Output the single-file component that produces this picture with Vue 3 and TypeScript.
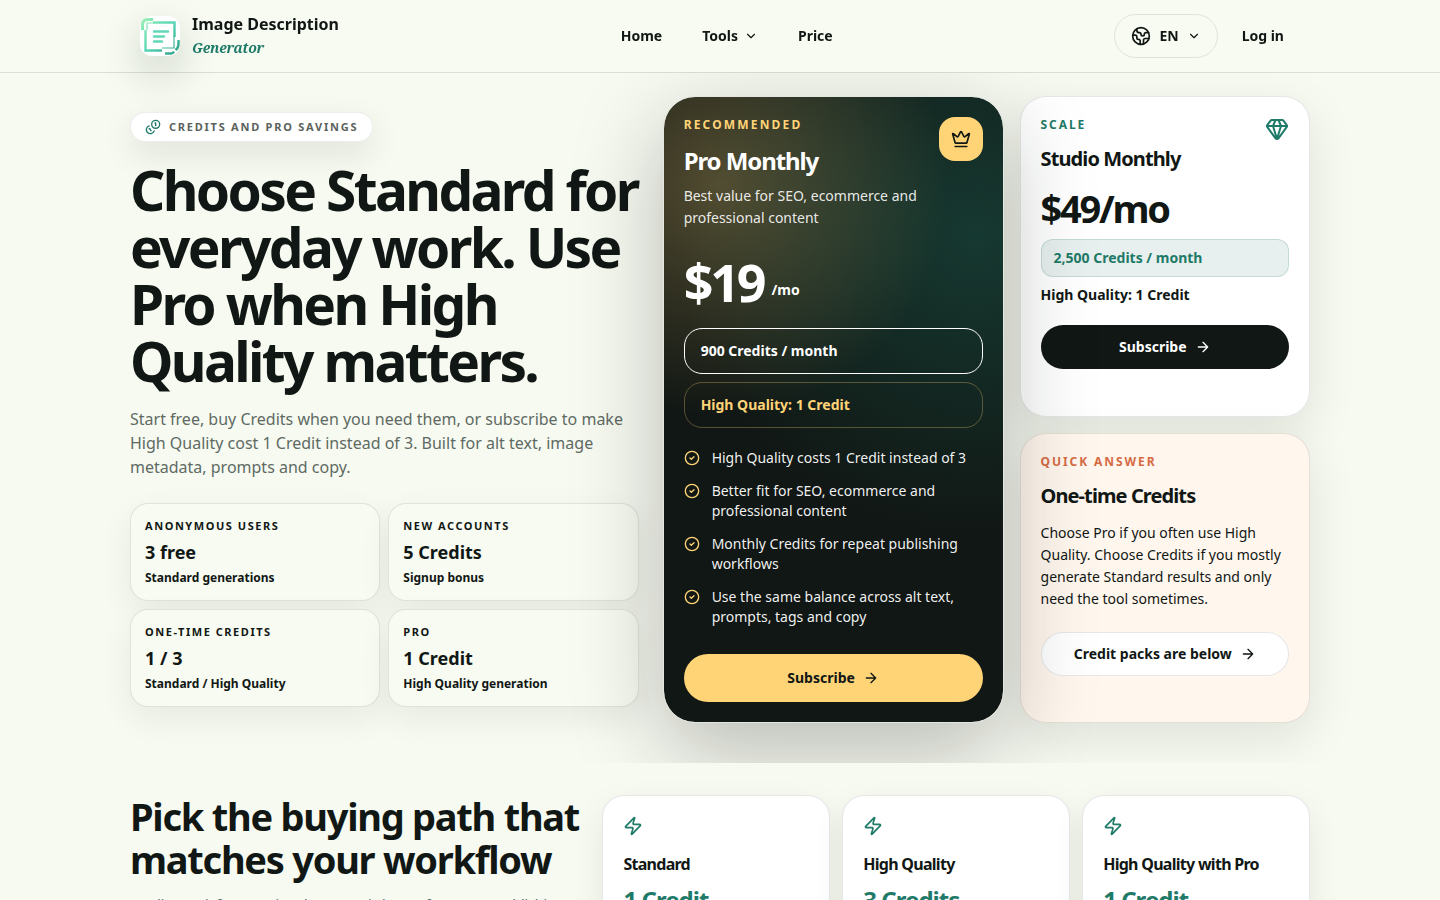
<script setup lang="ts">
interface Stat {
  label: string
  value: string
  note: string
}

interface Path {
  title: string
  cost: string
}

const stats: Stat[] = [
  { label: 'Anonymous users', value: '3 free', note: 'Standard generations' },
  { label: 'New accounts', value: '5 Credits', note: 'Signup bonus' },
  { label: 'One-time credits', value: '1 / 3', note: 'Standard / High Quality' },
  { label: 'Pro', value: '1 Credit', note: 'High Quality generation' },
]

const features: string[] = [
  'High Quality costs 1 Credit instead of 3',
  'Better fit for SEO, ecommerce and professional content',
  'Monthly Credits for repeat publishing workflows',
  'Use the same balance across alt text, prompts, tags and copy',
]

const paths: Path[] = [
  { title: 'Standard', cost: '1 Credit' },
  { title: 'High Quality', cost: '3 Credits' },
  { title: 'High Quality with Pro', cost: '1 Credit' },
]
</script>

<template>
  <div class="page">
    <header class="topbar">
      <div class="topbar-inner">
        <a class="brand" href="#">
          <span class="brand-mark">
            <svg viewBox="0 0 40 40" width="40" height="40" fill="none" aria-hidden="true">
              <defs>
                <linearGradient id="mark" gradientUnits="userSpaceOnUse" x1="2" y1="2" x2="38" y2="38">
                  <stop offset="0" stop-color="#9bf0b4" />
                  <stop offset="0.5" stop-color="#5ad6b6" />
                  <stop offset="1" stop-color="#2a9f86" />
                </linearGradient>
              </defs>
              <g stroke="url(#mark)">
                <path d="M2.500 14V9q0-5.500 5.500-5.500h5" stroke-width="3" />
                <path d="M5.500 14v20.500H22M13 6.500h21.500V21" stroke-width="2.400" />
                <path d="M7 14V7h8M34 20v12H22" stroke-width="1.200" />
                <path d="M38.500 24v4q0 4-3 6M25 37.500h6q2 0 3-2" stroke-width="2.400" />
              </g>
              <path d="M14 15.500h14M14 20.500h10M14 25.500h8" stroke="#62d8b8" stroke-width="2.400" stroke-linecap="round" />
            </svg>
          </span>
          <span class="brand-text">
            <span class="brand-name">Image Description</span>
            <span class="brand-sub">Generator</span>
          </span>
        </a>
        <nav class="nav" aria-label="Main">
          <a href="#">Home</a>
          <button type="button">
            Tools
            <svg class="icon" viewBox="0 0 24 24" width="14" height="14" aria-hidden="true"><path d="m6 9 6 6 6-6" /></svg>
          </button>
          <a href="#">Price</a>
        </nav>
        <div class="account">
          <button class="lang" type="button">
            <svg class="icon" viewBox="0 0 24 24" width="20" height="20" aria-hidden="true">
              <path d="M21.540 15H17a2 2 0 0 0-2 2v4.540M7 3.340V5a3 3 0 0 0 3 3 2 2 0 0 1 2 2c0 1.100.9 2 2 2a2 2 0 0 0 2-2c0-1.100.9-2 2-2h3.170M11 21.950V18a2 2 0 0 0-2-2 2 2 0 0 1-2-2v-1a2 2 0 0 0-2-2H2.050" />
              <circle cx="12" cy="12" r="10" />
            </svg>
            EN
            <svg class="icon" viewBox="0 0 24 24" width="14" height="14" aria-hidden="true"><path d="m6 9 6 6 6-6" /></svg>
          </button>
          <a class="login" href="#">Log in</a>
        </div>
      </div>
    </header>

    <main>
      <section class="hero">
        <div class="hero-grid">
          <div class="intro">
            <p class="pill">
              <svg class="icon" viewBox="0 0 24 24" width="16" height="16" aria-hidden="true">
                <path d="M13.744 17.736a6 6 0 1 1-7.480-7.480M15 6h1v4M6.134 14.768l.866-.5 2 3.464" />
                <circle cx="16" cy="8" r="6" />
              </svg>
              Credits and pro savings
            </p>
            <h1>Choose Standard for everyday work. Use Pro when High Quality matters.</h1>
            <p class="lead">
              Start free, buy Credits when you need them, or subscribe to make High Quality cost 1 Credit
              instead of 3. Built for alt text, image metadata, prompts and copy.
            </p>
            <ul class="stats">
              <li v-for="stat in stats" :key="stat.label" class="stat">
                <span class="stat-label">{{ stat.label }}</span>
                <strong class="stat-value">{{ stat.value }}</strong>
                <span class="stat-note">{{ stat.note }}</span>
              </li>
            </ul>
          </div>

          <div class="plans">
            <article class="pro">
              <div class="pro-head">
                <div>
                  <p class="eyebrow gold">Recommended</p>
                  <h2>Pro Monthly</h2>
                  <p class="pro-desc">Best value for SEO, ecommerce and professional content</p>
                </div>
                <span class="crown">
                  <svg class="icon" viewBox="0 0 24 24" width="20" height="20" aria-hidden="true">
                    <path d="M11.562 3.266a.5.5 0 0 1 .876 0L15.390 8.870a1 1 0 0 0 1.516.294L21.183 5.500a.5.5 0 0 1 .798.519l-2.834 10.246a1 1 0 0 1-.956.734H5.810a1 1 0 0 1-.957-.734L2.020 6.020a.5.5 0 0 1 .798-.519l4.276 3.664a1 1 0 0 0 1.516-.294zM5 21h14" />
                  </svg>
                </span>
              </div>
              <p class="pro-price"><strong>$19</strong><span>/mo</span></p>
              <p class="chip">900 Credits / month</p>
              <p class="chip chip-gold">High Quality: 1 Credit</p>
              <ul class="features">
                <li v-for="feature in features" :key="feature">
                  <svg class="icon" viewBox="0 0 24 24" width="16" height="16" aria-hidden="true">
                    <circle cx="12" cy="12" r="10" />
                    <path d="m9 12 2 2 4-4" />
                  </svg>
                  {{ feature }}
                </li>
              </ul>
              <button class="cta cta-gold" type="button">
                Subscribe
                <svg class="icon" viewBox="0 0 24 24" width="16" height="16" aria-hidden="true"><path d="M5 12h14M12 5l7 7-7 7" /></svg>
              </button>
            </article>

            <div class="side">
              <article class="card">
                <div class="card-head">
                  <div>
                    <p class="eyebrow green">Scale</p>
                    <h3>Studio Monthly</h3>
                  </div>
                  <svg class="icon green" viewBox="0 0 24 24" width="24" height="24" aria-hidden="true">
                    <path d="M10.500 3 8 9l4 13 4-13-2.500-6M17 3a2 2 0 0 1 1.600.8l3 4a2 2 0 0 1 .013 2.382l-7.990 10.986a2 2 0 0 1-3.247 0l-7.990-10.986A2 2 0 0 1 2.400 7.800l2.998-3.997A2 2 0 0 1 7 3zM2 9h20" />
                  </svg>
                </div>
                <p class="card-price">$49/mo</p>
                <p class="credit-box">2,500 Credits / month</p>
                <p class="card-note">High Quality: 1 Credit</p>
                <button class="cta cta-dark" type="button">
                  Subscribe
                  <svg class="icon" viewBox="0 0 24 24" width="16" height="16" aria-hidden="true"><path d="M5 12h14M12 5l7 7-7 7" /></svg>
                </button>
              </article>
              <article class="card peach">
                <p class="eyebrow orange">Quick answer</p>
                <h3>One-time Credits</h3>
                <p class="card-text">
                  Choose Pro if you often use High Quality. Choose Credits if you mostly generate Standard
                  results and only need the tool sometimes.
                </p>
                <a class="cta cta-light" href="#">
                  Credit packs are below
                  <svg class="icon" viewBox="0 0 24 24" width="16" height="16" aria-hidden="true"><path d="M5 12h14M12 5l7 7-7 7" /></svg>
                </a>
              </article>
            </div>
          </div>
        </div>
      </section>

      <section class="paths">
        <div class="paths-grid">
          <div>
            <h2>Pick the buying path that matches your workflow</h2>
            <p class="paths-text">
              Credits work for occasional use. Pro is better for repeat publishing, especially when
              High Quality matters.
            </p>
          </div>
          <ul class="path-cards">
            <li v-for="path in paths" :key="path.title" class="path-card">
              <svg class="icon green" viewBox="0 0 24 24" width="20" height="20" aria-hidden="true">
                <path d="M4 14a1 1 0 0 1-.780-1.630l9.900-10.200a.5.5 0 0 1 .860.460l-1.920 6.020A1 1 0 0 0 13 10h7a1 1 0 0 1 .780 1.630l-9.900 10.200a.5.5 0 0 1-.860-.460l1.920-6.020A1 1 0 0 0 11 14z" />
              </svg>
              <h3>{{ path.title }}</h3>
              <p>{{ path.cost }}</p>
            </li>
          </ul>
        </div>
      </section>
    </main>
  </div>
</template>

<style>
body {
  margin: 0;
  background: #f7faf1;
}
</style>

<style scoped>
.page {
  font-family: "Noto Sans", "Liberation Sans", sans-serif;
  font-size: 14px;
  line-height: 20px;
  color: #111714;
  background: #f7faf1;
}

.page *,
.page *::before {
  box-sizing: border-box;
}

h1, h2, h3, p, ul {
  margin: 0;
  padding: 0;
}

ul {
  list-style: none;
}

a {
  color: inherit;
  text-decoration: none;
}

button {
  font: inherit;
  color: inherit;
  background: none;
  border: 0;
  padding: 0;
  cursor: pointer;
}

.icon {
  flex: none;
  fill: none;
  stroke: currentColor;
  stroke-width: 2;
  stroke-linecap: round;
  stroke-linejoin: round;
}

.topbar {
  position: sticky;
  top: 0;
  z-index: 10;
  background: rgba(247, 250, 241, 0.86);
  backdrop-filter: blur(18px);
  box-shadow: 0 1px 0 rgba(17, 23, 20, 0.12);
}

.topbar-inner {
  display: flex;
  justify-content: space-between;
  align-items: center;
  max-width: 1160px;
  height: 72px;
  margin: 0 auto;
}

.brand {
  display: flex;
  align-items: center;
  gap: 12px;
}

.brand-mark {
  width: 40px;
  height: 40px;
  border-radius: 12px;
  background: #fff;
  box-shadow: 0 16px 40px rgba(17, 23, 20, 0.2);
}

.brand-text {
  display: flex;
  flex-direction: column;
  line-height: 24px;
}

.brand-name {
  font-size: 16px;
  font-weight: 700;
}

.brand-sub {
  font-family: "Noto Serif", "Liberation Serif", serif;
  font-size: 14px;
  font-style: italic;
  font-weight: 700;
  letter-spacing: -0.02em;
  color: #1f7a68;
}

.nav {
  display: flex;
  gap: 40px;
  font-weight: 700;
}

.nav button {
  display: flex;
  align-items: center;
  gap: 6px;
}

.account {
  display: flex;
  justify-content: flex-end;
  align-items: center;
  gap: 8px;
  font-weight: 700;
}

.lang {
  display: flex;
  align-items: center;
  gap: 8px;
  height: 44px;
  padding: 0 16px;
  border: 1px solid rgba(17, 23, 20, 0.1);
  border-radius: 22px;
}

.login {
  padding: 0 16px;
}

.hero {
  padding: 24px 0 40px;
  overflow: hidden;
}

.hero-grid,
.paths-grid {
  display: grid;
  max-width: 1180px;
  margin: 0 auto;
}

.hero-grid {
  grid-template-columns: 44fr 56fr;
  gap: 24px;
}

.intro {
  padding: 16px 0;
}

.pill {
  display: flex;
  align-items: center;
  gap: 8px;
  width: fit-content;
  height: 30px;
  padding: 0 14px;
  border: 1px solid rgba(17, 23, 20, 0.08);
  border-radius: 15px;
  background: #fff;
  box-shadow: 0 12px 32px rgba(17, 23, 20, 0.1);
  font-size: 11px;
  line-height: 16px;
  font-weight: 700;
  letter-spacing: 0.16em;
  text-transform: uppercase;
  color: #5a625c;
}

.pill .icon,
.green {
  color: #1f7a68;
}

h1 {
  margin-top: 19px;
  font-size: 55px;
  line-height: 57px;
  font-weight: 700;
  letter-spacing: -0.048em;
}

.lead {
  margin-top: 18px;
  font-size: 16px;
  line-height: 24px;
  color: #5e6a63;
}

.stats {
  display: grid;
  grid-template-columns: 1fr 1fr;
  gap: 8px;
  margin-top: 24px;
}

.stat {
  display: flex;
  flex-direction: column;
  padding: 14px 14px 13px;
  border: 1px solid rgba(17, 23, 20, 0.1);
  border-radius: 18px;
  background: #f8fbf2;
  box-shadow: 0 12px 32px rgba(17, 23, 20, 0.07);
}

.stat-label {
  font-size: 11px;
  line-height: 16px;
  font-weight: 700;
  letter-spacing: 0.14em;
  text-transform: uppercase;
}

.stat-value {
  margin-top: 4px;
  font-size: 18px;
  line-height: 28px;
  font-weight: 700;
}

.stat-note {
  margin-top: 3px;
  font-size: 12px;
  line-height: 18px;
  font-weight: 700;
}

.plans {
  display: grid;
  grid-template-columns: 54fr 46fr;
  gap: 16px;
}

.pro {
  position: relative;
  z-index: 1;
  display: flex;
  flex-direction: column;
  padding: 20px;
  border: 1px solid #e3e7e0;
  border-radius: 32px;
  background:
    radial-gradient(circle at 16% 14%, rgba(255, 212, 119, 0.27), transparent 38%),
    radial-gradient(circle at 92% 22%, rgba(31, 122, 104, 0.34), transparent 52%),
    #111714;
  background-clip: padding-box;
  box-shadow: 0 28px 90px rgba(17, 23, 20, 0.28);
  color: #fff;
}

.pro-head,
.card-head {
  display: flex;
  justify-content: space-between;
  align-items: flex-start;
}

.eyebrow {
  font-size: 12px;
  line-height: 16px;
  font-weight: 700;
  letter-spacing: 0.16em;
  text-transform: uppercase;
}

.gold {
  letter-spacing: 0.18em;
  color: #ffd477;
}

.orange {
  color: #d66b44;
}

.pro h2 {
  margin-top: 12px;
  font-size: 24px;
  line-height: 32px;
  font-weight: 700;
  letter-spacing: -0.045em;
}

.pro-desc {
  margin-top: 8px;
  line-height: 22px;
  color: rgba(255, 255, 255, 0.9);
}

.crown {
  display: grid;
  place-items: center;
  flex: none;
  width: 44px;
  height: 44px;
  border-radius: 16px;
  background: #ffd477;
  color: #111714;
}

.pro-price {
  display: flex;
  align-items: flex-end;
  gap: 8px;
  margin: 27px 0 20px;
}

.pro-price strong {
  font-size: 52px;
  line-height: 52px;
  font-weight: 700;
  letter-spacing: -0.06em;
}

.pro-price span {
  padding-bottom: 8px;
  line-height: 20px;
  font-weight: 700;
}

.chip {
  padding: 12px 16px;
  border: 1px solid #fff;
  border-radius: 18px;
  line-height: 20px;
  font-weight: 700;
}

.chip-gold {
  margin-top: 8px;
  border-color: rgba(255, 212, 119, 0.3);
  color: #ffd477;
}

.features {
  display: flex;
  flex-direction: column;
  gap: 13px;
  margin: 20px 0;
  line-height: 20px;
  color: rgba(255, 255, 255, 0.95);
}

.features li {
  display: flex;
  gap: 12px;
}

.features .icon {
  margin-top: 2px;
  color: #ffd477;
}

.cta {
  display: flex;
  justify-content: center;
  align-items: center;
  gap: 8px;
  height: 44px;
  border-radius: 24px;
  font-weight: 700;
}

.cta-gold {
  height: 48px;
  margin-top: auto;
  background: #ffd477;
  color: #111714;
}

.cta-dark {
  margin-top: 20px;
  background: #111714;
  color: #fff;
}

.cta-light {
  margin-top: 22px;
  border: 1px solid rgba(17, 23, 20, 0.1);
  background: #fff;
}

.side {
  display: grid;
  gap: 16px;
}

.card {
  display: flex;
  flex-direction: column;
  padding: 20px;
  border: 1px solid rgba(17, 23, 20, 0.1);
  border-radius: 26px;
  background: #fff;
  box-shadow: 0 16px 48px rgba(17, 23, 20, 0.1);
}

.peach {
  background: #fff6ed;
}

.card h3 {
  margin-top: 12px;
  font-size: 20px;
  line-height: 28px;
  font-weight: 700;
  letter-spacing: -0.045em;
}

.card-price {
  margin-top: 15px;
  font-size: 38px;
  line-height: 40px;
  font-weight: 700;
  letter-spacing: -0.06em;
}

.credit-box {
  margin-top: 11px;
  padding: 8px 12px;
  border: 1px solid rgba(31, 122, 104, 0.18);
  border-radius: 12px;
  background: #e7f0ef;
  line-height: 20px;
  font-weight: 700;
  color: #1f7a68;
}

.card-note {
  margin-top: 8px;
  line-height: 20px;
  font-weight: 700;
}

.card-text {
  margin-top: 12px;
  line-height: 22px;
}

.paths {
  padding: 32px 0;
}

.paths-grid {
  grid-template-columns: 39fr 61fr;
  gap: 20px;
}

.paths h2 {
  font-size: 38px;
  line-height: 43px;
  font-weight: 700;
  letter-spacing: -0.033em;
}

.paths-text {
  margin-top: 12px;
  line-height: 24px;
  color: #5e6a63;
}

.path-cards {
  display: grid;
  grid-template-columns: repeat(3, 1fr);
  gap: 12px;
}

.path-card {
  padding: 20px;
  border: 1px solid rgba(17, 23, 20, 0.1);
  border-radius: 22px;
  background: #fff;
  box-shadow: 0 12px 32px rgba(17, 23, 20, 0.08);
}

.path-card .icon {
  display: block;
}

.path-card h3 {
  margin-top: 16px;
  font-size: 16px;
  line-height: 24px;
  font-weight: 700;
  letter-spacing: -0.045em;
}

.path-card p {
  margin-top: 8px;
  font-size: 24px;
  line-height: 32px;
  font-weight: 700;
  letter-spacing: -0.04em;
  color: #1f7a68;
}
</style>
